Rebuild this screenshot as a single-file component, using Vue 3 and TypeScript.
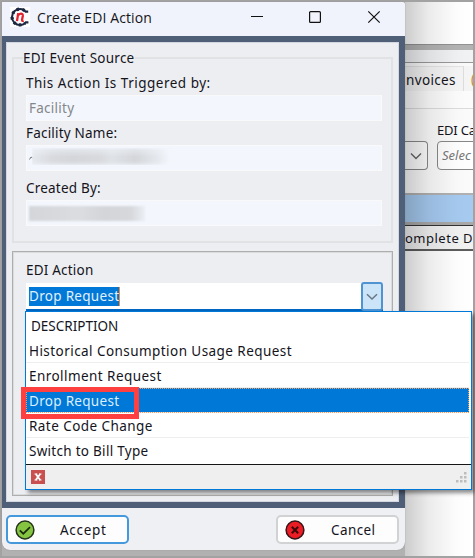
<script setup lang="ts">
interface Field { label: string; value: string; smudge: string }

const fields: Field[] = [
  { label: 'This Action Is Triggered by:', value: 'Facility', smudge: '' },
  { label: 'Facility Name:', value: '', smudge: 'name' },
  { label: 'Created By:', value: '', smudge: 'author' },
]

const selected = 'Drop Request'
const options: string[] = [
  'Historical Consumption Usage Request',
  'Enrollment Request',
  'Drop Request',
  'Rate Code Change',
  'Switch to Bill Type',
]
const gripDots: [number, number][] = [[8, 0], [4, 4], [8, 4], [0, 8], [4, 8], [8, 8]]
</script>

<template>
  <div class="screen">
    <div class="backdrop">
      <div class="b-top"></div>
      <div class="b-bar"></div>
      <div class="b-strip"></div>
      <div class="b-tabs"><span class="b-tab">nvoices</span><span class="b-next">(</span></div>
      <div class="b-gap"></div>
      <div class="b-filters">
        <div class="b-combo-left">
          <svg width="12" height="8" viewBox="0 0 12 8"><path d="M1 1.5 6 6.5 11 1.5" fill="none" stroke="#666" stroke-width="1.4" /></svg>
        </div>
        <div class="b-field">
          <span class="b-label">EDI Ca</span>
          <div class="b-combo">Selec</div>
        </div>
      </div>
      <div class="b-blue"></div>
      <div class="b-head"><span>omplete D</span></div>
      <div class="b-rest"></div>
    </div>

    <section class="dialog">
      <header class="title">
        <svg class="logo" width="20" height="20" viewBox="0 0 20 20">
          <rect width="20" height="20" fill="#fff" />
          <path d="M18.2 4.6H15.6Q13.6 2 10 2A8 8 0 0 0 10 18Q13.8 18 15.8 15.4H18.4" fill="none" stroke="#1c2840" stroke-width="2.1" />
          <path d="M14.5 3.6A7.9 7.9 0 1 0 15 16.1" fill="none" stroke="#1c2840" stroke-width="3.2" stroke-dasharray="2.4 3.2" />
          <path d="M7 14.2 8.2 6.2M7.8 8.8C9.4 5.8 13.2 5.8 12.8 9L12 13.1Q12 14.3 13.6 13.6" fill="none" stroke="#e3232d" stroke-width="2.3" />
        </svg>
        <h1>Create EDI Action</h1>
        <svg class="controls" width="132" height="14" viewBox="0 0 132 14" fill="none" stroke="#111" stroke-width="1.2">
          <path d="M1 6.5H13" />
          <rect x="59.6" y="1.6" width="10.8" height="10.8" rx="1" />
          <path d="M118.3 1.3 129.7 12.7M129.7 1.3 118.3 12.7" />
        </svg>
      </header>

      <div class="body">
        <div class="group source">
          <div class="legend"><span>EDI Event Source</span></div>
          <div v-for="f in fields" :key="f.label" class="field">
            <label :class="{ wide: f.value }">{{ f.label }}</label>
            <div class="input">
              <span v-if="f.value">{{ f.value }}</span>
              <svg v-if="f.smudge === 'name'" class="mark" width="4" height="5" viewBox="0 0 4 5"><path d="M.5 3.5 2 1 3.5 2" fill="none" stroke="#777" /></svg>
              <i v-if="f.smudge" class="smudge" :class="f.smudge"></i>
            </div>
          </div>
        </div>
        <div class="group action">
          <label>EDI Action</label>
          <div class="combo">
            <span class="chosen">{{ selected }}</span>
            <div class="arrow">
              <svg width="12" height="8" viewBox="0 0 12 8"><path d="M1 1.2 6 6 11 1.2" fill="none" stroke="#687785" stroke-width="1.5" /></svg>
            </div>
          </div>
        </div>
      </div>

      <footer class="buttons">
        <button class="btn accept">
          <svg width="20" height="20" viewBox="0 0 20 20"><circle cx="10" cy="10" r="8.9" fill="#85c440" stroke="#26331c" stroke-width="1.5" /><path d="M4.8 10.4 8.3 13.7 15 7.2" fill="none" stroke="#1c2a14" stroke-width="1.7" /></svg>
          <span>Accept</span>
        </button>
        <button class="btn cancel">
          <svg width="20" height="20" viewBox="0 0 20 20"><circle cx="10" cy="10" r="8.9" fill="#ec1c24" stroke="#351518" stroke-width="1.5" /><path d="M6.8 6.8 13.2 13.2M13.2 6.8 6.8 13.2" fill="none" stroke="#3a090b" stroke-width="2" /></svg>
          <span>Cancel</span>
        </button>
      </footer>
    </section>

    <div class="menu">
      <div class="menu-head">DESCRIPTION</div>
      <div v-for="o in options" :key="o" class="option" :class="{ on: o === selected }">{{ o }}</div>
      <div class="menu-foot">
        <svg width="14" height="14" viewBox="0 0 14 14"><rect width="14" height="14" fill="#c9504f" /><path d="M4.8 4 9.2 10M9.2 4 4.8 10" stroke="#fff" stroke-width="1.8" /><path d="M3.5 4H6.3M8 4H10.5M3.5 10H6.3M8 10H10.5" stroke="#fff" stroke-width="1" /></svg>
        <svg width="11" height="11" viewBox="0 0 11 11"><rect v-for="(d, i) in gripDots" :key="i" :x="d[0]" :y="d[1]" width="2.5" height="2.5" fill="#bdbdbd" /></svg>
      </div>
    </div>
    <div class="highlight"></div>
  </div>
</template>

<style>
body { margin: 0; overflow: hidden; }
</style>

<style scoped>
* { box-sizing: border-box; }
.screen { position: relative; width: 475px; height: 558px; background: #a2a2a2; overflow: hidden; font-family: "Noto Sans", "Open Sans", sans-serif; font-size: 13.5px; letter-spacing: .25px; color: #14141c; white-space: nowrap; }
.backdrop { position: absolute; left: 2px; top: 2px; width: 471px; height: 554px; padding-left: 403px; display: flex; flex-direction: column; background: #b1b1b1; overflow: hidden; letter-spacing: 0; font-size: 13px; }
.backdrop::after { content: ""; position: absolute; left: 403px; top: 0; width: 68px; height: 554px; background: linear-gradient(90deg, rgba(0,0,0,.2), rgba(0,0,0,.08) 35%, rgba(0,0,0,.01) 75%, transparent); }
.b-top { height: 42px; background: #fff; }
.b-bar { height: 6px; background: #b3b3b3; border-top: 1px solid #929292; }
.b-strip { height: 13px; background: #f1f2f4; border-bottom: 1px solid #999; }
.b-tabs { height: 28px; padding-top: 3px; background: #fafafa; display: flex; line-height: 26px; font-size: 13.5px; }
.b-tab { flex: none; width: 59px; background: #f5f5f5; border-top: 1px solid #e4e4e4; border-right: 1px solid #ddd; padding-left: 1px; letter-spacing: .35px; }
.b-next { flex: 1; padding-left: 7px; color: #d98628; background: #f5f5f5; }
.b-gap { height: 18px; background: #fcfcfc; border-bottom: 1px solid #dcdcdc; }
.b-filters { height: 86px; padding-top: 12px; background: #fbfbfb; border-bottom: 2px solid #b1b1b1; display: flex; gap: 9px; }
.b-combo-left { flex: none; width: 23px; height: 29px; margin-top: 20px; border: 1px solid #888; border-left: 0; border-radius: 0 4px 4px 0; display: flex; align-items: center; justify-content: center; background: #fff; }
.b-field { flex: none; width: 60px; }
.b-label { display: block; height: 20px; line-height: 18px; letter-spacing: -.2px; }
.b-combo { height: 29px; border: 1px solid #888; border-radius: 4px; line-height: 27px; padding-left: 4px; font-style: italic; color: #777; background: #fff; }
.b-blue { height: 27px; background: #a6caf0; }
.b-head { height: 29px; border-top: 3px solid #a9a9a9; border-bottom: 2px solid #5c5c5c; background: #f1f1f1; box-shadow: inset 0 1px #333; line-height: 26px; letter-spacing: .5px; }
.b-rest { flex: 1; background: #fff; }

.dialog { position: absolute; left: 2px; top: 2px; width: 403px; height: 548px; border-radius: 0 3px 8px 8px; background: #eff0f4; display: flex; flex-direction: column; overflow: hidden; box-shadow: 0 0 1px #777; }
.title { height: 34px; background: #f0f3fb; display: flex; align-items: center; padding: 0 23px 4px 8px; }
h1 { margin: 0 0 0 7px; font-size: 14px; font-weight: 400; letter-spacing: .1px; color: #15151a; font-family: "Open Sans", sans-serif; }
.controls { margin-left: auto; }
.body { height: 472px; border: solid #4f5f77; border-width: 6px 6px 6px 4px; background: #edeef2; padding: 15px 6px 6px; display: flex; flex-direction: column; gap: 8px; box-shadow: inset 0 0 0 1px #d3d7df; }
.group { border: 2px solid #e1e2e3; padding: 0 9px 0 12px; }
.source { height: 186px; }
.legend { height: 16px; margin-left: -3px; }
.legend span { position: relative; top: -10px; background: #edeef2; padding-right: 1px; line-height: 18px; }
label { display: block; line-height: 16px; height: 20px; letter-spacing: .2px; }
label.wide { letter-spacing: .5px; }
.field { height: 55px; }
.field:nth-child(2) { height: 50px; }
.input { height: 26px; background: #f3f7fd; border: 1px solid #f8f9f8; padding-left: 2px; display: flex; align-items: center; color: #84868a; line-height: 20px; }
.mark { margin-top: 1px; }
.smudge { display: block; filter: blur(1px); }
.smudge.name { width: 138px; height: 17px; margin-left: -1px; margin-bottom: 3px; background: linear-gradient(90deg, #e6e9ee, #d8dade 15%, #d4d6da 30%, #d8dade 50%, #dfe2e6 58%, #d4d6da 75%, #e4e7ec 90%, #f3f7fd); -webkit-mask-image: linear-gradient(rgba(0,0,0,.45), #000 50%, #000 75%, rgba(0,0,0,.6)); }
.smudge.author { width: 116px; height: 15px; background: linear-gradient(90deg, #d4d6da, #d8dade 30%, #dbdde1 42%, #d3d5d9 65%, #d6d8dc 88%, #eceff5); }
.action { height: 245px; border: 1px solid #aeaeac; box-shadow: inset 0 0 0 1px #dadbdc; padding: 10px 10px 0 13px; }
.action label { height: 21px; }
.combo { height: 29px; margin-right: -1px; display: flex; justify-content: space-between; background: #fff; border-bottom: 3px solid #0067c0; padding: 4px 0 0 3px; }
.chosen { height: 19px; line-height: 18px; background: #0078d7; color: #e2f0fb; letter-spacing: .3px; border-right: 1px solid #ff8728; }
.arrow { width: 22px; height: 29px; margin-top: -5px; border: 2px solid #4e94d3; border-radius: 3px; background: #cce4f7; display: flex; align-items: center; justify-content: center; }
.buttons { height: 42px; padding: 7px 6px 6px 4px; display: flex; justify-content: space-between; }
.btn { width: 123px; height: 29px; border: 2px solid #4499dc; border-radius: 5px; background: #fdfdfd; padding: 0 7px; display: flex; align-items: center; font: inherit; letter-spacing: .7px; color: inherit; }
.btn span { margin-left: 25px; }
.cancel { border-color: #d1d2d4; letter-spacing: .4px; }
.cancel span { margin-left: 26px; }

.menu { position: absolute; left: 25px; top: 311px; width: 447px; height: 179px; border: 1px solid #0078d7; background: #fff; box-shadow: 3px 3px 4px rgba(0,0,0,.45); }
.menu-head { height: 26px; line-height: 29px; padding-left: 5px; letter-spacing: 0; }
.option { height: 25px; line-height: 26px; padding-left: 3px; letter-spacing: .44px; border-bottom: 1px solid #eee; margin-right: 2px; }
.option.on { background: #0078d7; color: #dceefb; letter-spacing: .3px; outline: 1px dotted #f0a266; outline-offset: -1px; }
.option:nth-last-child(2) { height: 26px; border-bottom: 0; letter-spacing: .28px; }
.menu-foot { height: 25px; border-top: 1px solid #161616; background: #efefef; display: flex; align-items: center; justify-content: space-between; padding: 0 4px 0 5px; }
.highlight { position: absolute; left: 21px; top: 387px; width: 118px; height: 32px; border: 5px solid #ff4040; }
</style>
